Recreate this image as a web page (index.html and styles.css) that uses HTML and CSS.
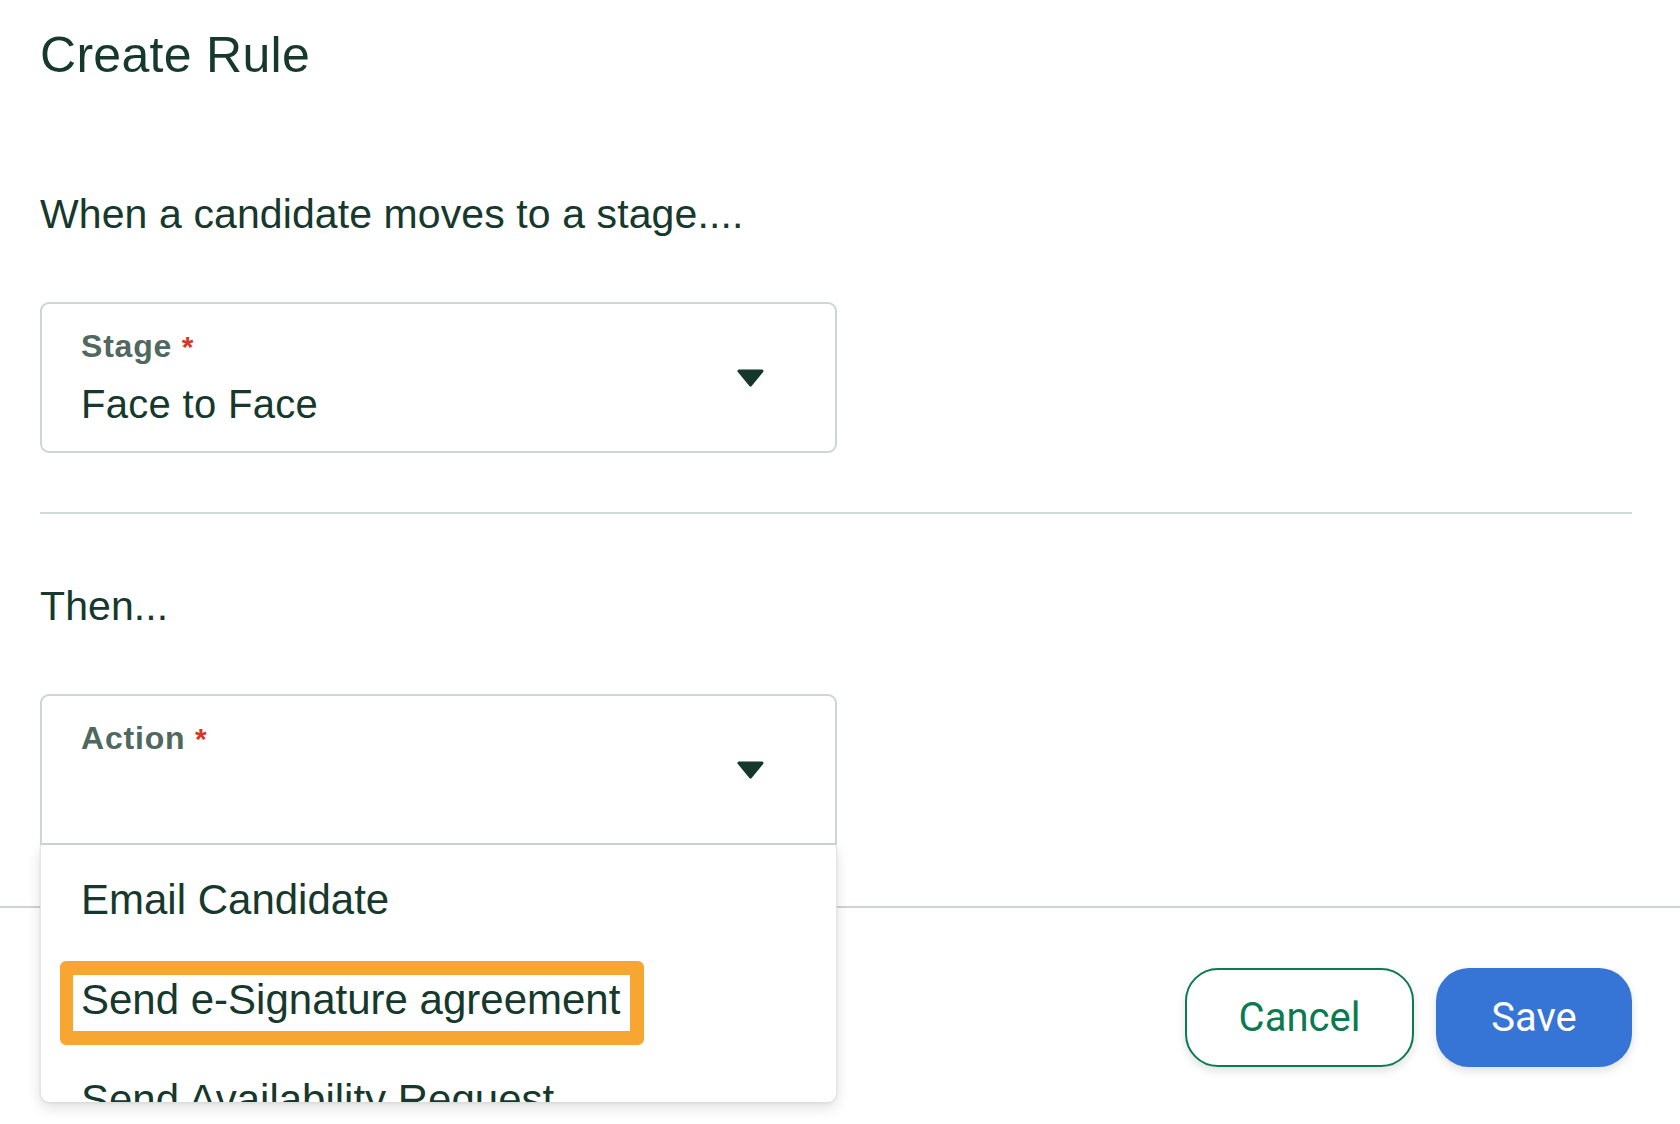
FILE: index.html
```html
<!DOCTYPE html>
<html lang="en">
<head>
<meta charset="utf-8">
<title>Create Rule</title>
<link rel="stylesheet" href="styles.css">
</head>
<body>
<main class="page">
  <h1 class="title">Create Rule</h1>
  <p class="prompt prompt-first">When a candidate moves to a stage....</p>
  <div class="select">
    <div class="select-text">
      <div class="select-label">Stage <span class="req">*</span></div>
      <div class="select-value">Face to Face</div>
    </div>
    <svg class="caret" width="27" height="18" viewBox="0 0 27 18"><polygon points="2,2 25,2 13.5,16" fill="#15372c" stroke="#15372c" stroke-width="3" stroke-linejoin="round"/></svg>
  </div>
  <hr class="divider">
  <p class="prompt prompt-then">Then...</p>
  <div class="select-wrap">
    <div class="select select-open">
      <div class="select-text">
        <div class="select-label">Action <span class="req">*</span></div>
        <div class="select-value"></div>
      </div>
      <svg class="caret" width="27" height="18" viewBox="0 0 27 18"><polygon points="2,2 25,2 13.5,16" fill="#15372c" stroke="#15372c" stroke-width="3" stroke-linejoin="round"/></svg>
    </div>
    <ul class="menu">
      <li class="menu-item">Email Candidate</li>
      <li class="menu-item"><span class="highlight">Send e-Signature agreement</span></li>
      <li class="menu-item">Send Availability Request</li>
    </ul>
  </div>
</main>
<footer class="footer">
  <button class="btn btn-cancel">Cancel</button>
  <button class="btn btn-save">Save</button>
</footer>
</body>
</html>
```

FILE: styles.css
```css
* { box-sizing: border-box; }
html, body { margin: 0; padding: 0; background: #ffffff; }
body {
  font-family: "Liberation Sans", Arial, sans-serif;
  color: #15372c;
  width: 1680px;
  height: 1124px;
  overflow: hidden;
}
.page {
  padding: 25px 48px 0 40px;
}
.title {
  margin: 0;
  font-size: 50px;
  line-height: 60px;
  font-weight: 400;
  color: #16382d;
  letter-spacing: 0.3px;
}
.prompt {
  margin: 0;
  font-size: 41px;
  line-height: 50px;
  color: #16382d;
  letter-spacing: 0.1px;
}
.prompt-first { margin-top: 104px; }
.prompt-then { margin-top: 67px; }
.select {
  margin-top: 63px;
  width: 797px;
  height: 151px;
  border: 2px solid #cfd5d3;
  border-radius: 9px;
  padding: 24px 71px 24px 39px;
  display: flex;
  align-items: center;
  justify-content: space-between;
  background: #fff;
}
.select-wrap {
  position: relative;
  width: 797px;
  margin-top: 63px;
  z-index: 2;
}
.select-wrap .select { margin-top: 0; }
.select-open {
  border-radius: 9px 9px 0 0;
}
.select-text {
  display: flex;
  flex-direction: column;
  align-self: stretch;
}
.select-label {
  font-size: 32px;
  line-height: 36px;
  font-weight: 700;
  color: #50685f;
  letter-spacing: 0.8px;
}
.req {
  color: #d6372b;
  font-size: 30px;
  font-weight: 700;
}
.select-value {
  margin-top: 15px;
  font-size: 40px;
  line-height: 48px;
  height: 48px;
  color: #16382d;
  letter-spacing: 0.3px;
}
.caret { display: block; flex: none; }
.divider {
  margin: 59px 0 0 0;
  border: 0;
  height: 2px;
  background: #d1d9d6;
}
.menu {
  position: absolute;
  top: 100%;
  left: 0;
  width: 797px;
  height: 257px;
  margin: 0;
  padding: 5px 0 0 0;
  list-style: none;
  background: #fff;
  border-left: 1px solid #e2e6e5;
  border-right: 1px solid #e2e6e5;
  border-radius: 0 0 9px 9px;
  box-shadow: 0 6px 14px rgba(0, 0, 0, 0.12), 0 1px 3px rgba(0, 0, 0, 0.08);
  overflow: hidden;
}
.menu-item {
  height: 100px;
  line-height: 100px;
  padding-left: 40px;
  font-size: 42px;
  color: #16382d;
  white-space: nowrap;
}
.highlight {
  display: inline-block;
  margin-left: -21px;
  border: 14px solid #f6a631;
  border-left-width: 13px;
  border-radius: 6px;
  padding: 5px 10px 11px 8px;
  line-height: 40px;
  background: #fff;
}
.footer {
  margin-top: 61px;
  border-top: 2px solid #ccd5d2;
  padding: 60px 48px 0 0;
  display: flex;
  justify-content: flex-end;
  gap: 22px;
}
.btn {
  height: 99px;
  border-radius: 33px;
  font-family: Roboto, "Liberation Sans", sans-serif;
  font-size: 40px;
  line-height: 1;
  box-shadow: 0 4px 10px rgba(0, 0, 0, 0.12);
  cursor: pointer;
}
.btn-cancel {
  width: 229px;
  background: #fff;
  color: #0b7a51;
  border: 2px solid #0b7a51;
}
.btn-save {
  width: 196px;
  background: #3674d6;
  color: #fff;
  border: 0;
}
```
